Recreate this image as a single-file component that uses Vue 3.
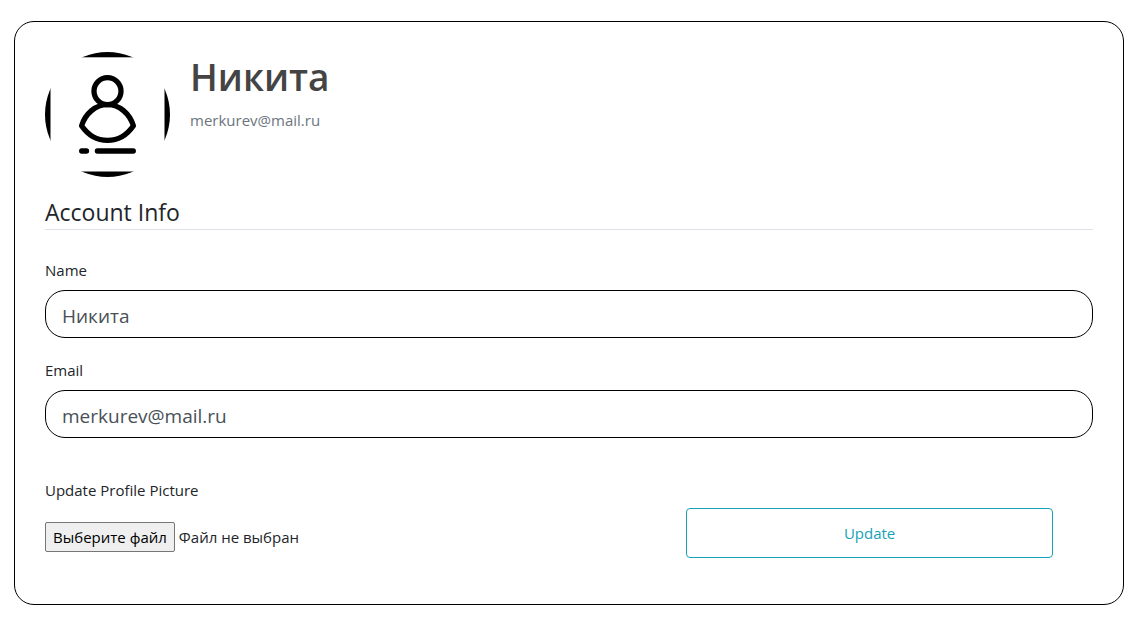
<script setup>
import { ref } from 'vue'

const name = ref('Никита')
const email = ref('merkurev@mail.ru')
const fileName = ref('Файл не выбран')

function pickFile(event) {
  const file = event.target.files[0]
  fileName.value = file ? file.name : 'Файл не выбран'
}
</script>

<template>
  <main class="card">
    <header class="profile">
      <svg class="avatar" viewBox="0 0 125 125" role="img" aria-label="Profile picture">
        <circle cx="62.5" cy="62.5" r="62.5" fill="#000" />
        <rect x="5.5" y="5.3" width="114" height="114.2" fill="#fff" />
        <g fill="none" stroke="#000" stroke-width="5.3" stroke-linecap="round" stroke-linejoin="round">
          <circle cx="62.5" cy="39.2" r="13.5" />
          <path d="M36.6 73.7C40.5 61.5 50.5 52.7 62.5 52.7S84.5 61.5 88.4 73.7C82 83 73 88.4 62.5 88.4S43 83 36.6 73.7Z" />
          <path d="M36.7 99H41.5M52.4 99H88.3" />
        </g>
      </svg>
      <div class="identity">
        <h1>{{ name }}</h1>
        <p>{{ email }}</p>
      </div>
    </header>

    <form @submit.prevent>
      <h2>Account Info</h2>
      <div class="field">
        <label for="name">Name</label>
        <input id="name" v-model="name" type="text">
      </div>
      <div class="field">
        <label for="email">Email</label>
        <input id="email" v-model="email" type="email">
      </div>
      <div class="actions">
        <div class="picture">
          <label for="picture">Update Profile Picture</label>
          <div class="file">
            <span class="file-button">Выберите файл</span>
            <span>{{ fileName }}</span>
            <input id="picture" type="file" accept="image/*" @change="pickFile">
          </div>
        </div>
        <button type="submit">Update</button>
      </div>
    </form>
  </main>
</template>

<style>
body {
  background: #fff;
}
</style>

<style scoped>
* {
  box-sizing: border-box;
}

.card {
  margin: 21px 21px 21px 14px;
  padding: 30px;
  border: 1px solid #000;
  border-radius: 20px;
  color: #212529;
  font: 15px/24px "Open Sans", "Noto Sans", sans-serif;
}

.profile {
  display: flex;
  gap: 20px;
}

.avatar {
  flex: none;
  width: 125px;
  height: 125px;
}

.identity h1 {
  margin: 0 0 6px;
  color: #444;
  font-size: 37px;
  font-weight: 600;
  line-height: 50px;
}

.identity p {
  margin: 0;
  color: #6c757d;
}

h2 {
  margin: 20px 0 28px;
  padding-bottom: 2px;
  border-bottom: 1px solid #dee2e6;
  font-size: 23px;
  font-weight: 400;
  line-height: 30px;
}

.field {
  margin-bottom: 20px;
}

.field label {
  display: block;
  margin-bottom: 8px;
}

.field input {
  display: block;
  width: 100%;
  height: 48px;
  padding: 10px 16px 6px;
  border: 1px solid #000;
  border-radius: 20px;
  background: #fff;
  color: #495057;
  font: inherit;
  font-size: 19px;
}

.actions {
  display: flex;
  align-items: flex-end;
  justify-content: space-between;
  margin-top: 40px;
  padding-bottom: 16px;
}

.picture {
  padding-bottom: 6px;
}

.picture label {
  display: block;
  margin-bottom: 20px;
}

.file {
  position: relative;
  display: flex;
  align-items: center;
  gap: 4px;
}

.file-button {
  padding: 2px 7px;
  border: 1px solid #767676;
  border-radius: 2px;
  background: #efefef;
  color: #000;
}

.file input {
  position: absolute;
  inset: 0;
  width: 100%;
  opacity: 0;
  cursor: pointer;
}

.actions button {
  width: 35%;
  height: 50px;
  margin-right: 40px;
  border: 1px solid #17a2b8;
  border-radius: 4px;
  background: #fff;
  color: #17a2b8;
  font: inherit;
  cursor: pointer;
}
</style>
